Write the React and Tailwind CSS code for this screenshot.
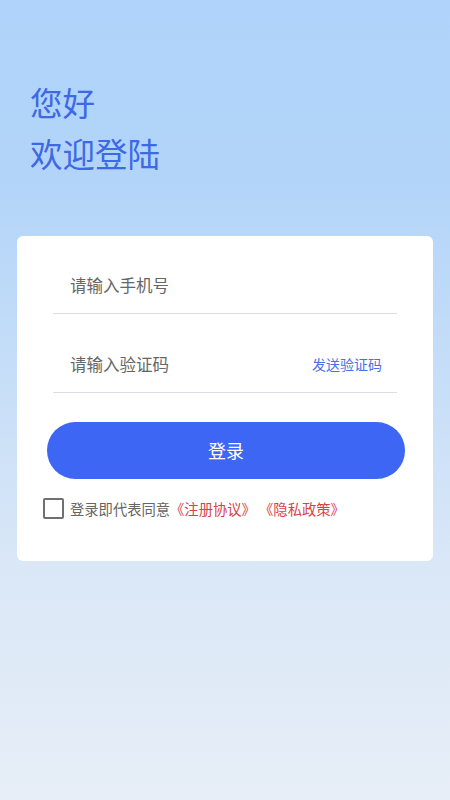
export default function App() {
  return (
    <div
      className="w-[450px] h-[800px] bg-[linear-gradient(180deg,#afd3fa_0%,#b2d4f9_22%,#d9e7f7_70%,#e7eef7_100%)] flex flex-col"
      style={{ fontFamily: '"Noto Sans CJK SC", "Noto Sans", sans-serif' }}
    >
      <div className="pt-[76px] pl-[30px] text-[32.5px] leading-[51px] text-[#3d68e6]">
        <div>您好</div>
        <div>欢迎登陆</div>
      </div>

      <div className="mx-[17px] mt-[58px] bg-white rounded-[6px] px-[36px] pt-[22px] pb-[42px]">
        <div className="h-[56px] flex items-center border-b border-[#dcdde3] pl-[17px] pb-[1px] text-[16.5px] text-[#666]">
          请输入手机号
        </div>
        <div className="mt-[22px] h-[57px] flex items-center justify-between border-b border-[#dcdde3] pl-[17px] pr-[15px]">
          <span className="text-[16.5px] text-[#666]">请输入验证码</span>
          <span className="text-[14px] text-[#4a6fe3]">发送验证码</span>
        </div>

        <button className="mt-[29px] -mx-[6px] w-[358px] h-[57px] rounded-full bg-[#3d66f5] text-white text-[18px] flex items-center justify-center">
          登录
        </button>

        <div className="mt-[19px] -ml-[10px] flex items-center gap-[6px] text-[14.3px]">
          <span className="w-[21px] h-[21px] border-2 border-[#707070] rounded-[2px] shrink-0" />
          <span className="text-[#666] whitespace-nowrap">
            登录即代表同意<span className="text-[#d7424a]">《注册协议》 《隐私政策》</span>
          </span>
        </div>
      </div>
    </div>
  );
}
